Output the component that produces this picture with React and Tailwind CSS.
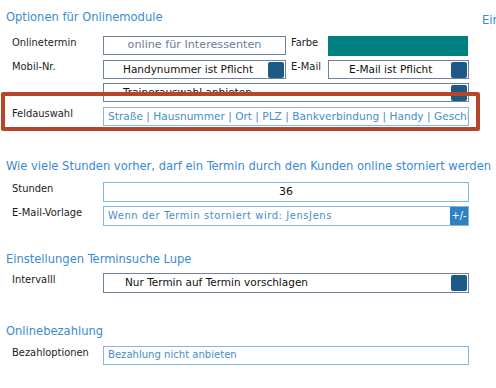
export default function App() {
  const cond = "font-['DejaVu_Sans_Condensed','DejaVu_Sans',sans-serif]";
  const wide = "font-['DejaVu_Sans',Verdana,sans-serif]";
  const heading = `${cond} text-[12.8px] leading-4 text-[#3a8bd0] whitespace-nowrap`;
  const label = `${cond} text-[11px] leading-[14px] text-[#1c1c1c]`;
  return (
    <div className={`relative w-[496px] h-[388px] overflow-hidden bg-white ${wide}`}>
      {/* Optionen */}
      <div className="flex justify-between pl-[6px] mt-[9px]">
        <h2 className={heading}>Optionen für Onlinemodule</h2>
        <span className={`${heading} mt-[3px] w-[14px] overflow-hidden`}>Ein</span>
      </div>

      <div className="flex mt-[8px] h-[19px]">
        <div className={`w-[103px] pl-[12px] ${label}`}>Onlinetermin</div>
        <div className="w-[183px] h-[19px] border border-[#71839c] flex items-center justify-center text-[11.2px] text-[#6b7d93] whitespace-nowrap">
          online für Interessenten
        </div>
        <div className={`w-[42px] pl-[5px] ${label}`}>Farbe</div>
        <div className="w-[140px] h-[20px] bg-[#008080]"></div>
      </div>

      <div className="flex mt-[5px] h-[19px]">
        <div className={`w-[103px] pl-[12px] ${label}`}>Mobil-Nr.</div>
        <div className="w-[183px] h-[19px] border border-[#71839c] flex items-center pl-[19px] pr-px text-[10.5px] text-[#111]">
          <span className="flex-1 whitespace-nowrap">Handynummer ist Pflicht</span>
          <span className="w-[16px] h-[16px] rounded-[2px] bg-[#1d5a86]"></span>
        </div>
        <div className={`w-[42px] pl-[5px] ${label}`}>E-Mail</div>
        <div className="w-[141px] h-[19px] border border-[#71839c] flex items-center pl-[20px] pr-px text-[10.5px] text-[#111]">
          <span className="flex-1 whitespace-nowrap">E-Mail ist Pflicht</span>
          <span className="w-[16px] h-[16px] rounded-[2px] bg-[#1d5a86]"></span>
        </div>
      </div>

      <div className="flex mt-[4px] h-[19px]">
        <div className="w-[103px]"></div>
        <div className="w-[366px] h-[19px] border border-[#71839c] flex items-center pl-[19px] pr-px text-[10.5px] text-[#111]">
          <span className="flex-1 whitespace-nowrap">Trainerauswahl anbieten</span>
          <span className="w-[16px] h-[16px] rounded-[2px] bg-[#1d5a86]"></span>
        </div>
      </div>

      <div className="flex mt-[5px] h-[19px]">
        <div className={`w-[103px] pl-[12px] ${label}`}>Feldauswahl</div>
        <div className="w-[366px] h-[19px] border border-[#86b6e0] flex items-center pl-[4px] overflow-hidden whitespace-nowrap text-[10.6px] text-[#4a8cca]">
          Straße | Hausnummer | Ort | PLZ | Bankverbindung | Handy | Geschlecht
        </div>
      </div>

      {/* Stornierung */}
      <h2 className={`pl-[6px] mt-[32px] ${heading}`}>
        Wie viele Stunden vorher, darf ein Termin durch den Kunden online storniert werden
      </h2>
      <div className="flex mt-[8px] h-[20px]">
        <div className={`w-[103px] pl-[12px] ${label}`}>Stunden</div>
        <div className="w-[366px] h-[20px] border border-[#86b6e0] flex items-center justify-center text-[11px] text-[#111]">36</div>
      </div>
      <div className="flex mt-[4px] h-[20px]">
        <div className={`w-[103px] pl-[12px] ${label}`}>E-Mail-Vorlage</div>
        <div className="w-[366px] h-[20px] border border-[#86b6e0] flex">
          <span className={`flex-1 flex items-center pl-[4px] text-[11px] tracking-[0.6px] text-[#4a8cca] whitespace-nowrap ${cond}`}>
            Wenn der Termin storniert wird: JensJens
          </span>
          <span className={`w-[18px] bg-[#2f80c2] text-white text-[11px] flex items-center justify-center ${cond}`}>+/-</span>
        </div>
      </div>

      {/* Lupe */}
      <h2 className={`pl-[6px] mt-[25px] ${heading}`}>Einstellungen Terminsuche Lupe</h2>
      <div className="flex mt-[6px] h-[20px]">
        <div className={`w-[103px] pl-[12px] ${label}`}>Intervalll</div>
        <div className="w-[366px] h-[20px] border border-[#71839c] flex items-center pl-[21px] pr-px text-[10.5px] text-[#111]">
          <span className="flex-1 whitespace-nowrap">Nur Termin auf Termin vorschlagen</span>
          <span className="w-[16px] h-[16px] rounded-[2px] bg-[#1d5a86]"></span>
        </div>
      </div>

      {/* Bezahlung */}
      <h2 className={`pl-[6px] mt-[30px] ${heading}`}>Onlinebezahlung</h2>
      <div className="flex mt-[7px] h-[19px]">
        <div className={`w-[103px] pl-[12px] ${label}`}>Bezahloptionen</div>
        <div className={`w-[366px] h-[19px] border border-[#86b6e0] flex items-center pl-[4px] text-[11.2px] text-[#4a8cca] ${cond}`}>
          Bezahlung nicht anbieten
        </div>
      </div>

      {/* highlight around Feldauswahl */}
      <div className="absolute left-[1px] top-[92px] w-[479px] h-[39px] border-[4px] border-[#b7452a] rounded-[2px]"></div>
    </div>
  );
}
